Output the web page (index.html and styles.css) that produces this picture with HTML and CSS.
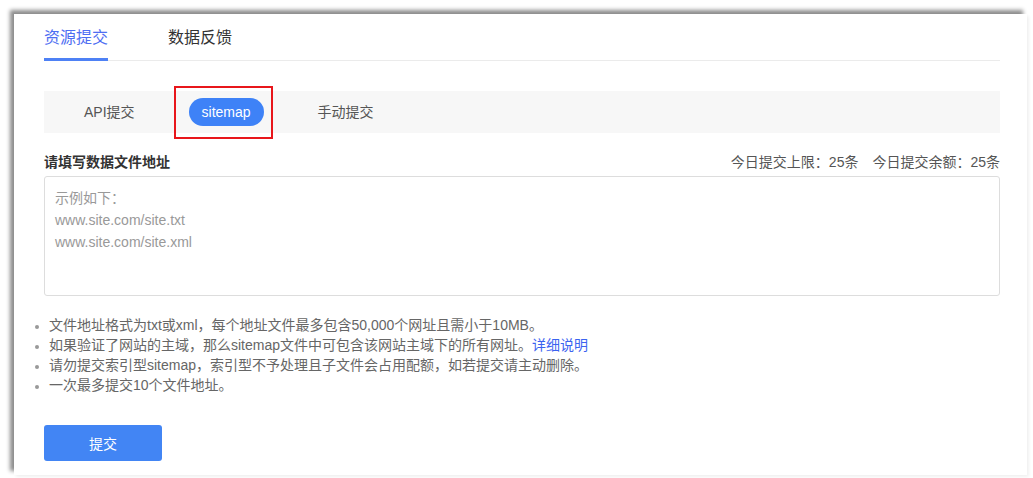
FILE: index.html
```html
<!DOCTYPE html>
<html lang="zh-CN">
<head>
  <meta charset="UTF-8">
  <title>资源提交</title>
  <link rel="stylesheet" href="styles.css">
</head>
<body>

  <div class="card">
    <div class="tabs">
      <div class="tab active">资源提交</div>
      <div class="tab">数据反馈</div>
    </div>

    <div class="subtabs">
      <div class="subtab">API提交</div>
      <div class="subtab current">sitemap</div>
      <div class="subtab">手动提交</div>
      <div class="mark"></div>
    </div>

    <div class="label-row">
      <span class="label">请填写数据文件地址</span>
      <span class="quota">今日提交上限：25条&emsp;今日提交余额：25条</span>
    </div>
    <textarea class="urls" placeholder="示例如下：&#10;www.site.com/site.txt&#10;www.site.com/site.xml"></textarea>

    <ul class="tips">
      <li>文件地址格式为txt或xml，每个地址文件最多包含50,000个网址且需小于10MB。</li>
      <li>如果验证了网站的主域，那么sitemap文件中可包含该网站主域下的所有网址。<a href="#">详细说明</a></li>
      <li>请勿提交索引型sitemap，索引型不予处理且子文件会占用配额，如若提交请主动删除。</li>
      <li>一次最多提交10个文件地址。</li>
    </ul>

    <button class="submit">提交</button>
  </div>

</body>
</html>
```

FILE: styles.css
```css
body {
  margin: 0;
  background-color: #fff;
  font-family: "Liberation Sans", "Noto Sans CJK SC", sans-serif;
  color: #333;
}

.card {
  margin: 14px 6px 3px 14px;
  padding: 0 27px 14px 30px;
  background-color: #fff;
  box-shadow: -4px -4px 4px rgba(0, 0, 0, 0.45), 2px 2px 3px rgba(0, 0, 0, 0.06);
}

/* top tabs */
.tabs {
  display: flex;
  gap: 60px;
  border-bottom: 1px solid #ebebeb;
}

.tab {
  font-size: 16px;
  line-height: 24px;
  padding: 12px 0 8px;
  border-bottom: 3px solid transparent;
  margin-bottom: -1px;
  color: #333;
}

.tab.active {
  color: #4e6ef2;
  border-bottom-color: #4e81f5;
}

/* sub tabs */
.subtabs {
  position: relative;
  display: flex;
  align-items: center;
  gap: 41px;
  height: 42px;
  margin-top: 30px;
  padding-left: 27px;
  background-color: #f7f7f7;
}

.subtab {
  height: 28px;
  line-height: 28px;
  padding: 0 13px;
  border-radius: 14px;
  font-size: 14px;
  color: #555;
}

.subtab.current {
  background-color: #3e82f7;
  color: #fff;
}

.mark {
  position: absolute;
  left: 130px;
  top: -5px;
  width: 99px;
  height: 53px;
  box-sizing: border-box;
  border: 2px solid #e8161b;
}

/* form */
.label-row {
  display: flex;
  justify-content: space-between;
  align-items: center;
  height: 20px;
  margin-top: 18px;
  margin-bottom: 5px;
}

.label {
  font-size: 14px;
  font-weight: bold;
  color: #333;
}

.quota {
  font-size: 14px;
  color: #555;
}

.urls {
  display: block;
  width: 100%;
  height: 120px;
  box-sizing: border-box;
  padding: 10px 10px;
  border: 1px solid #ddd;
  border-radius: 3px;
  resize: none;
  font-family: inherit;
  font-size: 14px;
  line-height: 22px;
  color: #333;
}

.urls::placeholder {
  color: #999;
}

.tips {
  margin: 19px 0 0;
  padding-left: 5px;
  list-style: disc outside;
}

.tips li {
  font-size: 14px;
  line-height: 20px;
  color: #666;
}

.tips li::marker {
  color: #999;
  font-size: 12px;
}

.tips a {
  color: #3b63f0;
  text-decoration: none;
}

.submit {
  display: block;
  width: 118px;
  height: 36px;
  margin-top: 30px;
  border: none;
  border-radius: 3px;
  background-color: #4285f4;
  color: #fff;
  font-family: inherit;
  font-size: 14px;
  cursor: pointer;
}
```
